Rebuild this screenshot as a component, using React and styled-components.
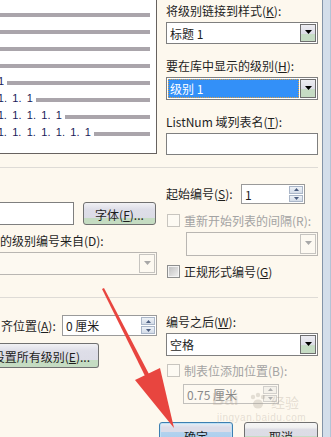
import React from 'react';
import styled, { createGlobalStyle } from 'styled-components';

const previewRows = [
  { num: null },
  { num: null },
  { num: null },
  { num: null },
  { num: '1', w: 4 },
  { num: '1. 1. 1', w: 33 },
  { num: '1. 1. 1. 1. 1', w: 62 },
  { num: '1. 1. 1. 1. 1. 1. 1', w: 91 },
];

const Tri = ({ up, color = '#000', w = 7, h = 4 }) => (
  <svg width={w} height={h} viewBox={`0 0 ${w} ${h}`}>
    <polygon
      points={up ? `0,${h} ${w},${h} ${w / 2},0` : `0,0 ${w},0 ${w / 2},${h}`}
      fill={color}
    />
  </svg>
);

const Dropdown = ({ value, selected, disabled, clipped, w, h, top, left }) => (
  <Select $w={w} $h={h} $top={top} $left={left} $disabled={disabled} $clipped={clipped}>
    <SelectValue $selected={selected}>{value}</SelectValue>
    <DropButton $disabled={disabled}>
      <Tri color={disabled ? '#a8a8a8' : '#000'} />
    </DropButton>
  </Select>
);

const Spinner = ({ value, disabled, w, h = 20, top, left }) => (
  <Spin $w={w} $h={h} $top={top} $left={left} $disabled={disabled}>
    <SpinValue $disabled={disabled}>{value}</SpinValue>
    <SpinButtons>
      <SpinBtn $disabled={disabled}>
        <Tri up w={5} h={3} color={disabled ? '#b0b0b0' : '#4b5d80'} />
      </SpinBtn>
      <SpinBtn $disabled={disabled}>
        <Tri w={5} h={3} color={disabled ? '#b0b0b0' : '#4b5d80'} />
      </SpinBtn>
    </SpinButtons>
  </Spin>
);

const Check = ({ label, disabled, top }) => (
  <CheckRow $top={top} $disabled={disabled}>
    <CheckBox $disabled={disabled} />
    {label}
  </CheckRow>
);

const App = () => {
  return (
    <>
      <GlobalStyle />
      <Window>
        <Dialog>
          <TopSection>
            <Preview>
              {previewRows.map((row, i) => (
                <PreviewRow key={i}>
                  {row.num && (
                    <Numbers $w={row.w}>
                      <span>{row.num}</span>
                    </Numbers>
                  )}
                  <Bar />
                </PreviewRow>
              ))}
            </Preview>
            <Column>
              <Label $top={4}>
                将级别链接到样式(<U>K</U>):
              </Label>
              <Dropdown value="标题 1" top={4} />
              <Label $top={15}>
                要在库中显示的级别(<U>H</U>):
              </Label>
              <Dropdown value="级别 1" selected top={4} h={23} />
              <Label $top={15}>
                ListNum 域列表名(<U>T</U>):
              </Label>
              <TextInput $top={4} $h={22} />
            </Column>
          </TopSection>
          <Separator />
          <MidSection>
            <Column>
              <FontRow>
                <TextInput $clipped $w={74} $h={23} />
                <PushButton $w={73} $h={23}>
                  字体(<U>F</U>)...
                </PushButton>
              </FontRow>
              <Label $top={9}>的级别编号来自(D):</Label>
              <Dropdown disabled clipped w={157} h={23} top={4} />
            </Column>
            <Column>
              <FieldRow $top={16}>
                <RowLabel $w={75}>
                  起始编号(<U>S</U>):
                </RowLabel>
                <Spinner value="1" w={64} />
              </FieldRow>
              <Check disabled top={10} label="重新开始列表的间隔(R):" />
              <Dropdown disabled w={132} h={24} top={5} left={20} />
              <Check
                top={9}
                label={
                  <span>
                    正规形式编号(<U>G</U>)
                  </span>
                }
              />
            </Column>
          </MidSection>
          <Separator />
          <BottomSection>
            <Column>
              <FieldRow $top={17}>
                <RowLabel $w={61} $left={1}>
                  齐位置(<U>A</U>):
                </RowLabel>
                <Spinner value="0 厘米" w={95} h={21} />
              </FieldRow>
              <PushButton $clipped $w={99} $h={25} $top={7}>
                <span>
                  设置所有级别(<U>E</U>)...
                </span>
              </PushButton>
            </Column>
            <Column>
              <Label $top={17}>
                编号之后(<U>W</U>):
              </Label>
              <Dropdown value="空格" top={4} h={23} />
              <Check disabled top={8} label="制表位添加位置(B):" />
              <Spinner disabled value="0.75 厘米" w={96} top={7} left={17} />
            </Column>
          </BottomSection>
          <ButtonRow>
            <DialogButton $primary>确定</DialogButton>
            <DialogButton>取消</DialogButton>
          </ButtonRow>
        </Dialog>
        <Frame />
        <Watermark>
          <WmBig>Bai</WmBig>
          <Paw viewBox="0 0 20 18" width="20" height="18">
            <circle cx="5" cy="5" r="2.2" />
            <circle cx="10" cy="3" r="2.2" />
            <circle cx="15" cy="5" r="2.2" />
            <ellipse cx="10" cy="12" rx="5" ry="4.5" />
          </Paw>
          <WmCjk>经验</WmCjk>
          <WmSmall>jingyan.baidu.com</WmSmall>
        </Watermark>
        <ArrowLayer width="331" height="437" viewBox="0 0 331 437">
          <polygon points="102,289 104,288 150,376 146,378" fill="#e8453f" />
          <polygon points="135,380 160,368 174,428" fill="#e8453f" />
        </ArrowLayer>
      </Window>
    </>
  );
};

const GlobalStyle = createGlobalStyle`
  html, body {
    margin: 0;
    padding: 0;
  }
  body {
    width: 331px;
    height: 437px;
    overflow: hidden;
    background: #fdf8ee;
    font-family: "Noto Sans CJK SC", "DejaVu Sans", sans-serif;
    font-size: 12px;
    color: #1e1e1e;
  }
`;

const Window = styled.div`
  position: relative;
  display: flex;
  align-items: flex-start;
  width: 331px;
  height: 437px;
  overflow: hidden;
  background: #fdf8ee;
`;

const Dialog = styled.div`
  width: 322px;
  flex-shrink: 0;
  display: flex;
  flex-direction: column;

  & > * {
    flex-shrink: 0;
  }
`;

const Frame = styled.div`
  width: 9px;
  height: 437px;
  flex-shrink: 0;
  box-sizing: border-box;
  background: #d3deea;
  border-left: 1px solid #8394a8;
  border-right: 1px solid #b3c4d6;
`;

const TopSection = styled.div`
  display: grid;
  grid-template-columns: 157px 152px;
  column-gap: 9px;
  align-items: start;
  height: 167px;
`;

const MidSection = styled(TopSection)`
  height: 129px;
`;

const BottomSection = styled(TopSection)`
  height: auto;
`;

const Separator = styled.div`
  width: 318px;
  height: 1px;
  background: #dedbd6;
`;

const Column = styled.div`
  display: flex;
  flex-direction: column;
  align-items: flex-start;

  & > * {
    flex-shrink: 0;
  }
`;

const Preview = styled.div`
  box-sizing: border-box;
  height: 154px;
  background: #fff;
  border-right: 1px solid #67625f;
  border-bottom: 1px solid #67625f;
  padding-right: 6px;
`;

const PreviewRow = styled.div`
  display: flex;
  align-items: flex-end;
  height: 17px;
`;

const Numbers = styled.div`
  display: flex;
  justify-content: flex-end;
  overflow: hidden;
  width: ${(p) => p.$w}px;
  margin-right: 3px;
  margin-bottom: -2px;
  font-family: "Liberation Sans", sans-serif;
  font-size: 11px;
  line-height: 11px;
  color: #1b1b5a;
  white-space: pre;
  word-spacing: 2.3px;

  span {
    flex-shrink: 0;
  }
`;

const Bar = styled.div`
  flex: 1;
  height: 4px;
  background: #aaa5ab;
`;

const Label = styled.div`
  height: 14px;
  line-height: 14px;
  white-space: nowrap;
  margin-top: ${(p) => p.$top || 0}px;
`;

const U = styled.span`
  text-decoration: underline;
  text-underline-offset: 1px;
`;

const Select = styled.div`
  display: flex;
  box-sizing: border-box;
  width: ${(p) => (p.$w ? `${p.$w}px` : '100%')};
  height: ${(p) => p.$h || 22}px;
  margin-top: ${(p) => p.$top || 0}px;
  margin-left: ${(p) => p.$left || 0}px;
  padding: 1px;
  border: 1px solid ${(p) => (p.$disabled ? '#b9b6b2' : '#7f7f7f')};
  border-left-width: ${(p) => (p.$clipped ? 0 : 1)}px;
  background: ${(p) => (p.$disabled ? '#fdf9f1' : '#fff')};
`;

const SelectValue = styled.div`
  flex: 1;
  display: flex;
  align-items: center;
  padding-left: 2px;
  margin-right: 1px;
  white-space: nowrap;
  background: ${(p) => (p.$selected ? '#3390f8' : 'transparent')};
  color: ${(p) => (p.$selected ? '#fff' : 'inherit')};
  outline: ${(p) => (p.$selected ? '1px dotted #e0a040' : 'none')};
  outline-offset: -1px;
`;

const DropButton = styled.div`
  width: 16px;
  box-sizing: border-box;
  display: flex;
  align-items: center;
  justify-content: center;
  padding-bottom: 2px;
  border: 1px solid ${(p) => (p.$disabled ? '#c6c4c0' : '#6e6e6e')};
  background: ${(p) =>
    p.$disabled
      ? '#fdf9f1'
      : 'linear-gradient(#ededf2 0%, #dcdce6 55%, #c6dcc4 56%, #c6dcc4 100%)'};
`;

const TextInput = styled.div`
  box-sizing: border-box;
  width: ${(p) => (p.$w ? `${p.$w}px` : '100%')};
  height: ${(p) => p.$h || 22}px;
  margin-top: ${(p) => p.$top || 0}px;
  background: #fff;
  border: 1px solid #7f7f7f;
  border-left-width: ${(p) => (p.$clipped ? 0 : 1)}px;
`;

const FontRow = styled.div`
  display: flex;
  gap: 9px;
  margin-top: 34px;
`;

const PushButton = styled.div`
  box-sizing: border-box;
  display: flex;
  align-items: center;
  justify-content: ${(p) => (p.$clipped ? 'flex-end' : 'center')};
  overflow: hidden;
  white-space: nowrap;
  width: ${(p) => p.$w}px;
  height: ${(p) => p.$h}px;
  margin-top: ${(p) => p.$top || 0}px;
  padding: 1px ${(p) => (p.$clipped ? 8 : 0)}px 0 0;
  border: 1px solid #707070;
  border-left-width: ${(p) => (p.$clipped ? 0 : 1)}px;
  border-radius: ${(p) => (p.$clipped ? '0 3px 3px 0' : '3px')};
  background: linear-gradient(#f1f1f4 0%, #dedee8 30%, #dcdce6 70%, #c5dcc2 71%, #c5dcc2 100%);

  span {
    flex-shrink: 0;
  }
`;

const FieldRow = styled.div`
  display: flex;
  align-items: center;
  margin-top: ${(p) => p.$top || 0}px;
`;

const RowLabel = styled.div`
  width: ${(p) => p.$w}px;
  margin-left: ${(p) => p.$left || 0}px;
  white-space: nowrap;
  line-height: 14px;
`;

const Spin = styled.div`
  display: flex;
  box-sizing: border-box;
  width: ${(p) => p.$w}px;
  height: ${(p) => p.$h}px;
  margin-top: ${(p) => p.$top || 0}px;
  margin-left: ${(p) => p.$left || 0}px;
  padding: 1px;
  border: 1px solid ${(p) => (p.$disabled ? '#c2c0bc' : '#9a9a9a')};
  background: ${(p) => (p.$disabled ? '#fdf9f1' : '#fff')};
`;

const SpinValue = styled.div`
  flex: 1;
  display: flex;
  align-items: center;
  padding-left: 2px;
  white-space: nowrap;
  color: ${(p) => (p.$disabled ? '#8a8a8a' : 'inherit')};
`;

const SpinButtons = styled.div`
  display: flex;
  flex-direction: column;
  gap: 1px;
  width: 14px;
`;

const SpinBtn = styled.div`
  flex: 1;
  box-sizing: border-box;
  display: flex;
  align-items: center;
  justify-content: center;
  border: 1px solid ${(p) => (p.$disabled ? '#d2d0cc' : '#aab6c8')};
  background: ${(p) =>
    p.$disabled ? '#f4f1ea' : 'linear-gradient(#eef2f7, #d4dce8)'};
`;

const CheckRow = styled.div`
  display: flex;
  align-items: center;
  gap: 4px;
  height: 13px;
  margin-top: ${(p) => p.$top || 0}px;
  margin-left: 1px;
  white-space: nowrap;
  color: ${(p) => (p.$disabled ? '#a3a3a3' : 'inherit')};
`;

const CheckBox = styled.div`
  box-sizing: border-box;
  flex-shrink: 0;
  width: 13px;
  height: 13px;
  border: 1px solid ${(p) => (p.$disabled ? '#c8c5bf' : '#8e8f8f')};
  background: ${(p) =>
    p.$disabled ? '#fdfaf3' : 'linear-gradient(135deg, #bdbdbd, #f2f2f2)'};
  box-shadow: ${(p) => (p.$disabled ? 'none' : 'inset 0 0 0 1px #f4f4f4')};
`;

const ButtonRow = styled.div`
  display: flex;
  justify-content: flex-end;
  gap: 11px;
  width: 322px;
  box-sizing: border-box;
  padding-right: 4px;
  margin-top: 18px;
`;

const DialogButton = styled.div`
  box-sizing: border-box;
  flex-shrink: 0;
  width: 74px;
  height: 24px;
  display: flex;
  align-items: center;
  justify-content: center;
  padding-top: 4px;
  border: 1px solid ${(p) => (p.$primary ? '#3c7fb1' : '#707070')};
  border-radius: 3px;
  background: ${(p) =>
    p.$primary
      ? 'linear-gradient(#e6f0f8 0%, #dcdce8 20%, #dcdce8 42%, #b2d2ee 43%, #a6cbec 100%)'
      : 'linear-gradient(#f6f6f6 0%, #f0f0f0 20%, #dddde5 30%, #dcdce6 60%, #c6dcc4 61%)'};
  box-shadow: ${(p) => (p.$primary ? 'inset 0 0 0 1px #bfe0f5' : 'none')};
`;

const Watermark = styled.div`
  position: absolute;
  left: 212px;
  top: 390px;
  width: 100px;
  height: 36px;
  pointer-events: none;
  color: rgba(170, 158, 145, 0.3);
`;

const WmBig = styled.span`
  position: absolute;
  left: 0;
  top: 0;
  font-family: "Liberation Sans", sans-serif;
  font-weight: bold;
  font-size: 17px;
`;

const Paw = styled.svg`
  position: absolute;
  left: 36px;
  top: 2px;
  fill: rgba(170, 158, 145, 0.3);
`;

const WmCjk = styled.span`
  position: absolute;
  left: 59px;
  top: 2px;
  font-size: 14px;
`;

const WmSmall = styled.span`
  position: absolute;
  left: 5px;
  top: 22px;
  font-family: "Liberation Sans", sans-serif;
  font-size: 10px;
  letter-spacing: 0.5px;
`;

const ArrowLayer = styled.svg`
  position: absolute;
  left: 0;
  top: 0;
  pointer-events: none;
`;

export default App;
